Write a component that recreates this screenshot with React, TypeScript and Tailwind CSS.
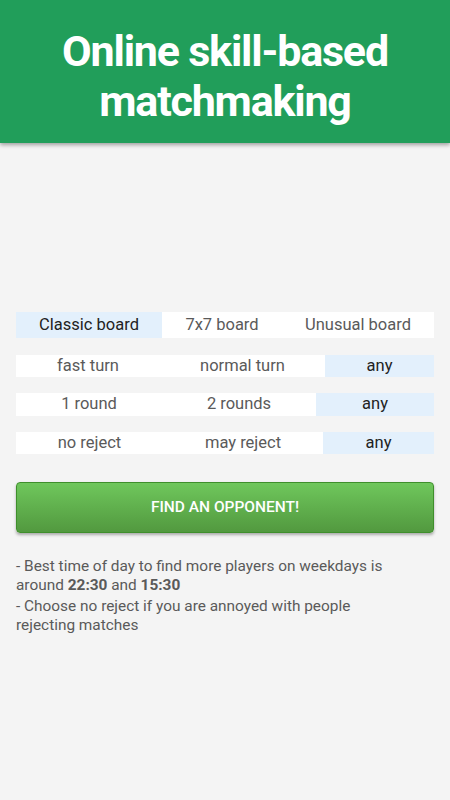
import React from "react";

const rows = [
  {
    h: "h-[26px]",
    cells: [
      { label: "Classic board", w: "w-[146px]", on: true },
      { label: "7x7 board", w: "w-[120px]", on: false },
      { label: "Unusual board", w: "flex-1", on: false },
    ],
  },
  {
    h: "h-[22px]",
    cells: [
      { label: "fast turn", w: "w-[144px]", on: false },
      { label: "normal turn", w: "w-[165px]", on: false },
      { label: "any", w: "flex-1", on: true },
    ],
  },
  {
    h: "h-[23px]",
    cells: [
      { label: "1 round", w: "w-[146px]", on: false },
      { label: "2 rounds", w: "w-[154px]", on: false },
      { label: "any", w: "flex-1", on: true },
    ],
  },
  {
    h: "h-[22px]",
    cells: [
      { label: "no reject", w: "w-[147px]", on: false },
      { label: "may reject", w: "w-[160px]", on: false },
      { label: "any", w: "flex-1", on: true },
    ],
  },
];

const App = () => {
  return (
    <div className="min-h-[800px] w-[450px] bg-[#f4f4f4] font-['Roboto',sans-serif] flex flex-col">
      {/* HEADER */}
      <div className="h-[143px] bg-[#219e5a] shadow-[0_2px_4px_rgba(0,0,0,0.35)] flex flex-col items-center justify-center pt-[8px]">
        <div className="text-white text-center font-bold text-[43px] leading-[50px] tracking-[-1.2px] font-['Roboto',sans-serif]">
          Online skill-based
          <br />
          matchmaking
        </div>
      </div>

      <div className="px-4 pt-[169px] flex flex-col">
        {/* OPTIONS */}
        <div className="flex flex-col gap-[16px]">
          {rows.map((row, i) => (
            <div key={i} className={`flex ${row.h} bg-white ${i === 0 ? "mb-[1px]" : ""}`}>
              {row.cells.map((c) => (
                <div
                  key={c.label}
                  className={`${c.w} flex items-center justify-center text-[16.5px] ${
                    c.on ? "bg-[#e3f0fc] text-[#222]" : "text-[#5a5a5a]"
                  }`}
                >
                  {c.label}
                </div>
              ))}
            </div>
          ))}
        </div>

        {/* BUTTON */}
        <button className="mt-[28px] h-[51px] w-full rounded-[4px] border border-[#3f8f2c] bg-gradient-to-b from-[#6fc75c] to-[#52993f] shadow-[0_2px_3px_rgba(0,0,0,0.3)] text-white text-[15.5px] font-medium">
          FIND AN OPPONENT!
        </button>

        {/* TIPS */}
        <div className="mt-[24px] w-[385px] text-[15.4px] leading-[19px] text-[#5a5a5a] flex flex-col gap-[2px]">
          <p>
            - Best time of day to find more players on weekdays is around{" "}
            <b className="font-bold">22:30</b> and <b className="font-bold">15:30</b>
          </p>
          <p>- Choose no reject if you are annoyed with people rejecting matches</p>
        </div>
      </div>
    </div>
  );
};

export default App;
